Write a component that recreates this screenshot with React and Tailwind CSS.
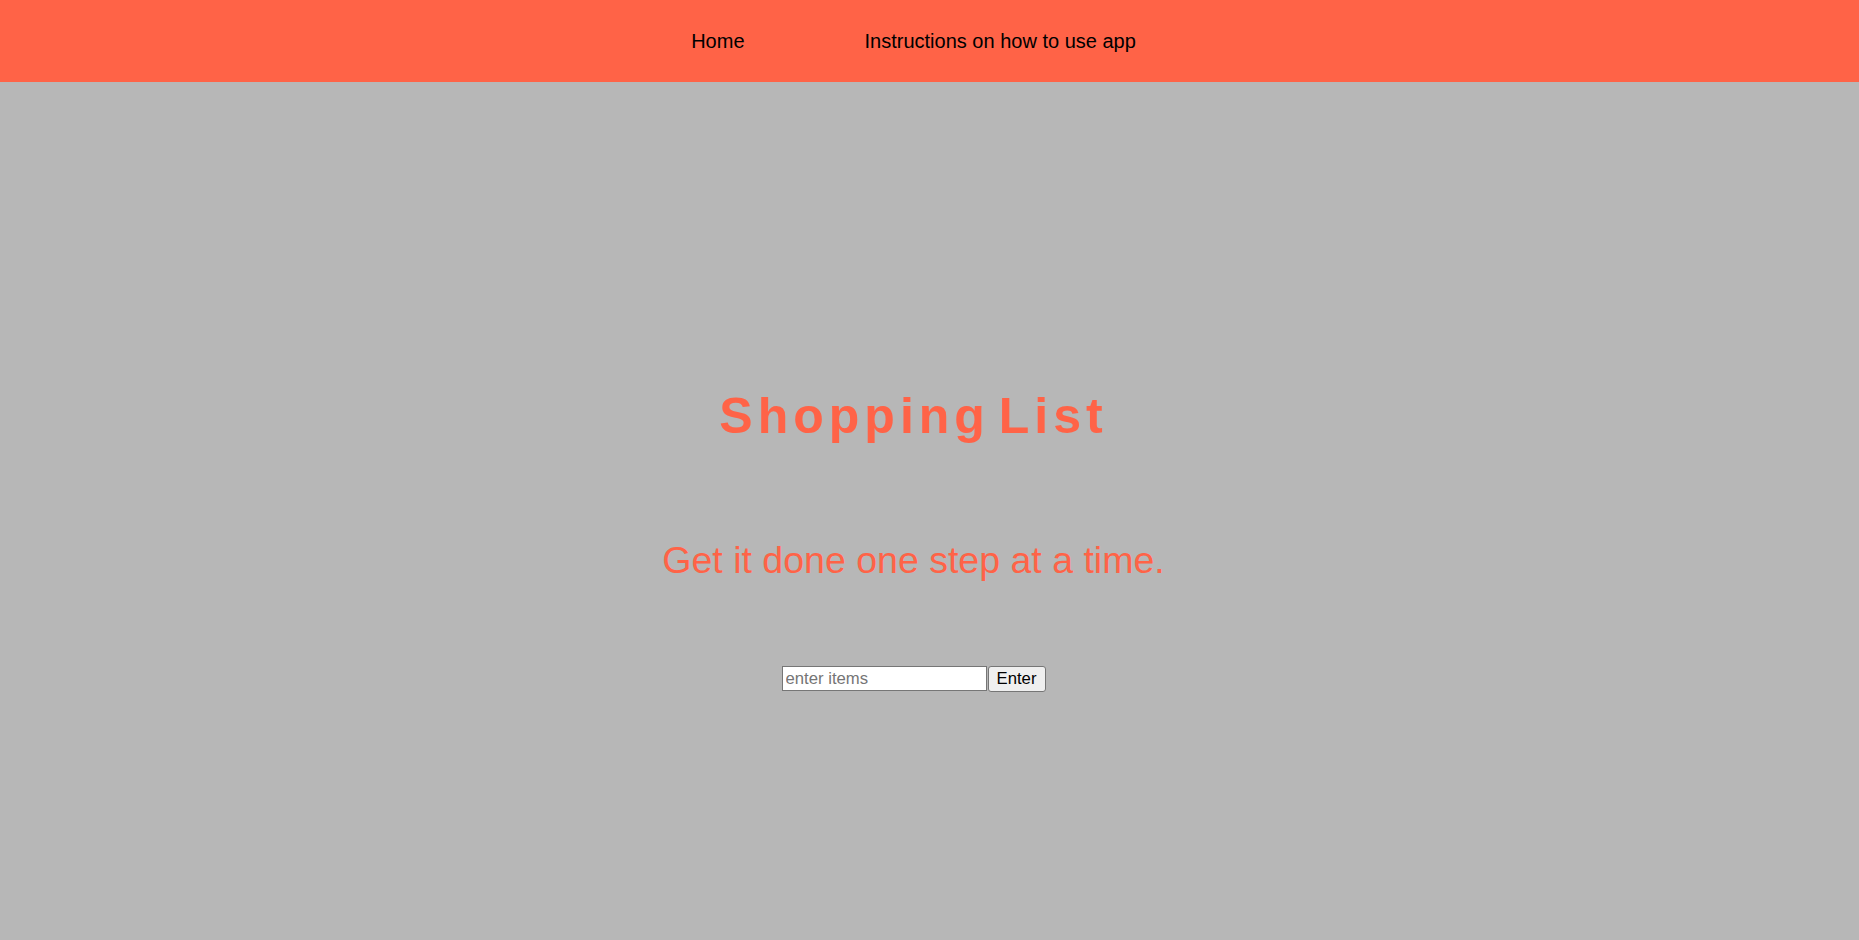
import { useState } from 'react';

const App = () => {
  const [item, setItem] = useState('');
  const [items, setItems] = useState([]);

  const handleAdd = () => {
    if (!item.trim()) return;
    setItems([...items, item.trim()]);
    setItem('');
  };

  return (
    <div className="min-h-screen bg-[#b7b7b7] font-['Liberation_Sans',Arial,sans-serif]">
      <nav className="h-[82px] bg-[#ff6347] flex items-center justify-center pr-[32px]">
        <ul className="flex items-center gap-[120px] text-[20px] text-black">
          <li><a href="#">Home</a></li>
          <li><a href="#">Instructions on how to use app</a></li>
        </ul>
      </nav>

      <main className="flex flex-col items-center pr-[32px] pt-[297px]">
        <h1 className="text-[50px] font-bold text-[#ff6347] tracking-[5px] [word-spacing:-10px] leading-normal">
          Shopping List
        </h1>
        <p className="mt-[78px] text-[37.5px] text-[#ff6347] leading-normal">
          Get it done one step at a time.
        </p>
        <div className="mt-[78px] flex items-start">
          <input
            type="text"
            placeholder="enter items"
            value={item}
            onChange={(e) => setItem(e.target.value)}
            className="w-[205px] h-[25px] px-[3px] bg-white border border-[#767676] text-[16.7px] text-black placeholder:text-[#757575] outline-none"
          />
          <button
            onClick={handleAdd}
            className="ml-[1px] w-[58px] h-[26px] bg-[#efefef] border border-[#767676] rounded-[3px] text-[16.7px] text-black leading-none"
          >
            Enter
          </button>
        </div>
        {items.length > 0 && (
          <ul className="mt-4 text-[18px]">
            {items.map((it, i) => (
              <li key={i}>{it}</li>
            ))}
          </ul>
        )}
      </main>
    </div>
  );
};

export default App;
